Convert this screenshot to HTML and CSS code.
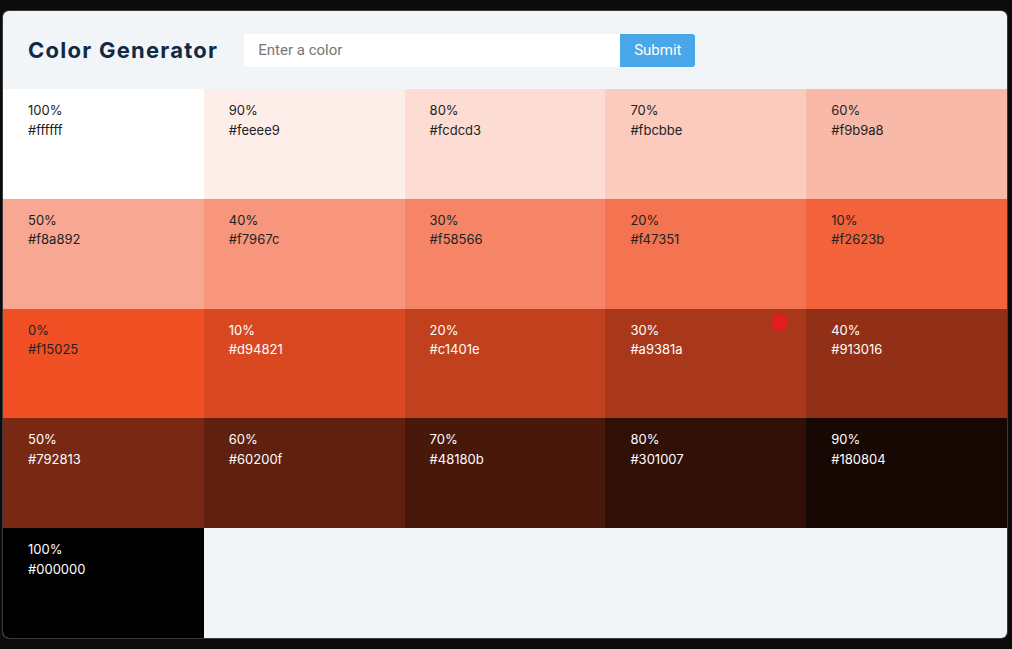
FILE: index.html
```html
<!DOCTYPE html>
<html>
<head>
<meta charset="utf-8">
<link rel="stylesheet" href="styles.css">
</head>
<body>
<main class="app">
  <header class="header">
    <h1 class="title">Color Generator</h1>
    <form class="form">
      <input class="input" type="text" placeholder="Enter a color">
      <button class="btn" type="button">Submit</button>
    </form>
  </header>
  <section class="grid">
    <article class="cell" style="background:#ffffff"><p>100%</p><p>#ffffff</p></article>
    <article class="cell" style="background:#feeee9"><p>90%</p><p>#feeee9</p></article>
    <article class="cell" style="background:#fcdcd3"><p>80%</p><p>#fcdcd3</p></article>
    <article class="cell" style="background:#fbcbbe"><p>70%</p><p>#fbcbbe</p></article>
    <article class="cell" style="background:#f9b9a8"><p>60%</p><p>#f9b9a8</p></article>
    <article class="cell" style="background:#f8a892"><p>50%</p><p>#f8a892</p></article>
    <article class="cell" style="background:#f7967c"><p>40%</p><p>#f7967c</p></article>
    <article class="cell" style="background:#f58566"><p>30%</p><p>#f58566</p></article>
    <article class="cell" style="background:#f47351"><p>20%</p><p>#f47351</p></article>
    <article class="cell" style="background:#f2623b"><p>10%</p><p>#f2623b</p></article>
    <article class="cell" style="background:#f15025"><p>0%</p><p>#f15025</p></article>
    <article class="cell light" style="background:#d94821"><p>10%</p><p>#d94821</p></article>
    <article class="cell light" style="background:#c1401e"><p>20%</p><p>#c1401e</p></article>
    <article class="cell light" style="background:#a9381a"><p>30%</p><p>#a9381a</p><span class="dot"></span></article>
    <article class="cell light" style="background:#913016"><p>40%</p><p>#913016</p></article>
    <article class="cell light" style="background:#792813"><p>50%</p><p>#792813</p></article>
    <article class="cell light" style="background:#60200f"><p>60%</p><p>#60200f</p></article>
    <article class="cell light" style="background:#48180b"><p>70%</p><p>#48180b</p></article>
    <article class="cell light" style="background:#301007"><p>80%</p><p>#301007</p></article>
    <article class="cell light" style="background:#180804"><p>90%</p><p>#180804</p></article>
    <article class="cell light" style="background:#000000"><p>100%</p><p>#000000</p></article>
  </section>
</main>
</body>
</html>
```

FILE: styles.css
```css
* { box-sizing: border-box; }
html, body { height: 100%; }
body {
  margin: 0;
  padding: 11px 5px 11px 3px;
  background: #0c0c0c;
  font-family: Inter, "Noto Sans", sans-serif;
}
.app {
  height: 100%;
  display: flex;
  flex-direction: column;
  background: #f1f5f8;
  border-radius: 6px;
  overflow: hidden;
  box-shadow: 0 0 0 1px #3a3a3a;
}
.header {
  height: 78px;
  flex: none;
  display: flex;
  align-items: center;
  padding: 0 25px;
  gap: 26px;
}
.title {
  margin: 0;
  font-size: 22px;
  font-weight: 700;
  color: #102a43;
  letter-spacing: 1.25px;
}
.form {
  display: flex;
  height: 33px;
}
.input {
  width: 376px;
  height: 33px;
  border: none;
  outline: none;
  padding: 0 14px;
  background: #fff;
  font-family: Roboto, "Open Sans", sans-serif;
  font-size: 15px;
  color: #333;
  border-radius: 3px 0 0 3px;
}
.input::placeholder { color: #777; }
.btn {
  width: 75px;
  height: 33px;
  border: none;
  background: #49a6e9;
  color: #fff;
  font-family: Roboto, "Open Sans", sans-serif;
  font-size: 15px;
  border-radius: 0 3px 3px 0;
  padding: 0;
}
.grid {
  flex: 1;
  display: grid;
  grid-template-columns: repeat(5, 1fr);
  grid-template-rows: repeat(5, 1fr);
}
.cell {
  position: relative;
  padding: 12px 25px;
  color: #222;
  font-size: 13px;
  line-height: 19.5px;
}
.cell p { margin: 0; }
.cell.light { color: #fff; }
.dot {
  position: absolute;
  left: 166px;
  top: 5px;
  width: 17px;
  height: 17px;
  border-radius: 50%;
  background: #e31c22;
}
```
